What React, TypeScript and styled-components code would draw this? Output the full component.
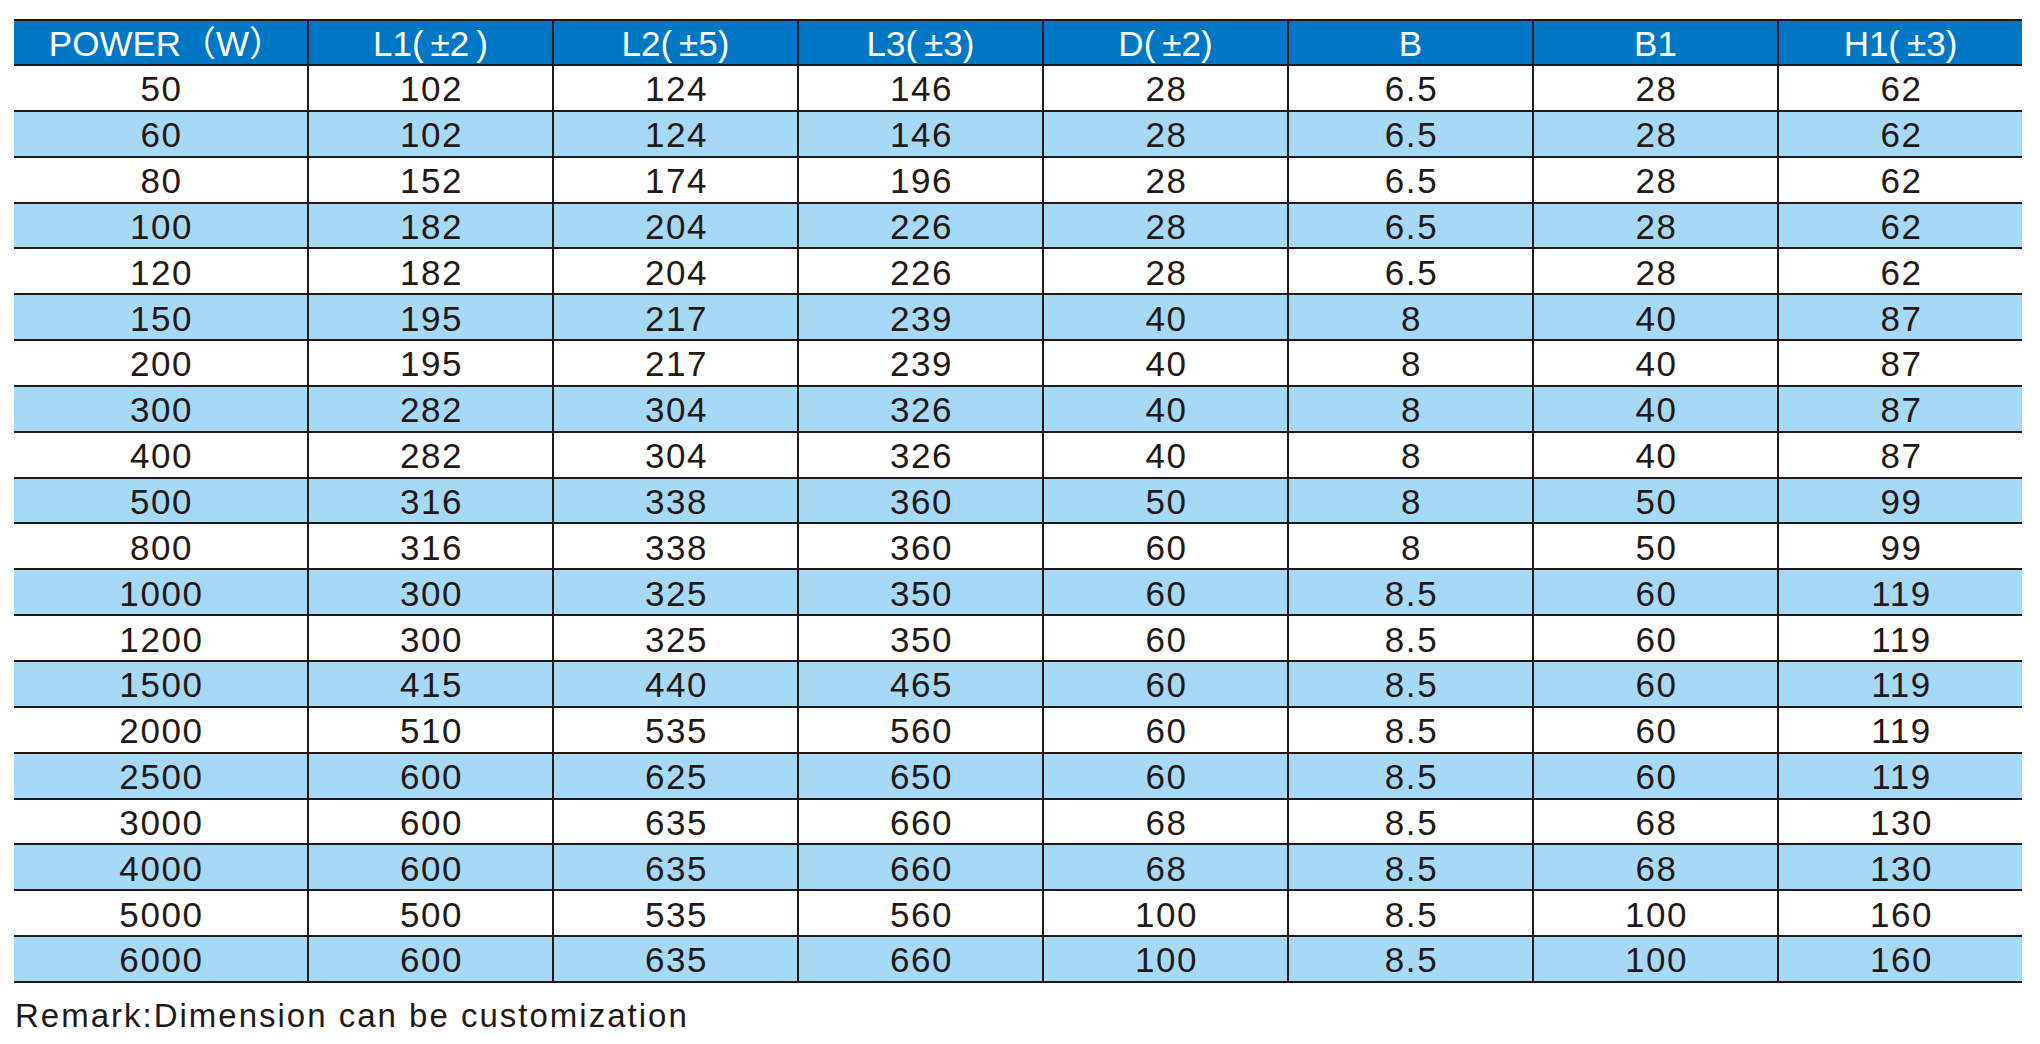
import React from 'react';
import styled, { createGlobalStyle } from 'styled-components';

const GlobalStyle = createGlobalStyle`
  html, body {
    margin: 0;
    padding: 0;
    background: #ffffff;
  }
  body {
    font-family: "Liberation Sans", Arial, "Noto Sans CJK SC", sans-serif;
    color: #231815;
  }
`;

const Page = styled.div`
  padding: 19px 18px 0 14px;
`;

const SpecTable = styled.table`
  width: 2008px;
  border-collapse: collapse;
  table-layout: fixed;
  border-top: 2px solid #231815;
  border-bottom: 2px solid #231815;
`;

const HeadCell = styled.th`
  background: #0077c4;
  color: #ffffff;
  font-weight: 400;
  font-size: 35px;
  letter-spacing: 0;
  height: 41px;
  padding: 2px 0 0 0;
  text-align: center;
  vertical-align: middle;
  border-left: 2px solid #231815;
  border-bottom: 2px solid #231815;
  line-height: 1;

  &:first-child {
    border-left: none;
    padding-left: 12px;
  }
`;

const Row = styled.tr<{ $alt: boolean }>`
  background: ${(p) => (p.$alt ? '#a6d9f6' : '#ffffff')};
`;

const Cell = styled.td`
  font-size: 35px;
  letter-spacing: 1.6px;
  padding: 2px 0 0 2px;
  height: 41.85px;
  text-align: center;
  vertical-align: middle;
  line-height: 1;
  border-left: 2px solid #231815;
  border-bottom: 2px solid #231815;

  &:first-child {
    border-left: none;
  }
`;

const Remark = styled.p`
  margin: 14px 0 0 1px;
  font-size: 33px;
  letter-spacing: 2px;
  color: #231815;
`;

const columns = [
  { label: 'POWER（W）', width: 294 },
  { label: 'L1(\u2009±2\u2009)', width: 245 },
  { label: 'L2(\u2009±5)', width: 245 },
  { label: 'L3(\u2009±3)', width: 245 },
  { label: 'D(\u2009±2)', width: 245 },
  { label: 'B', width: 245 },
  { label: 'B1', width: 245 },
  { label: 'H1(\u2009±3)', width: 244 },
];

const rows: string[][] = [
  ['50', '102', '124', '146', '28', '6.5', '28', '62'],
  ['60', '102', '124', '146', '28', '6.5', '28', '62'],
  ['80', '152', '174', '196', '28', '6.5', '28', '62'],
  ['100', '182', '204', '226', '28', '6.5', '28', '62'],
  ['120', '182', '204', '226', '28', '6.5', '28', '62'],
  ['150', '195', '217', '239', '40', '8', '40', '87'],
  ['200', '195', '217', '239', '40', '8', '40', '87'],
  ['300', '282', '304', '326', '40', '8', '40', '87'],
  ['400', '282', '304', '326', '40', '8', '40', '87'],
  ['500', '316', '338', '360', '50', '8', '50', '99'],
  ['800', '316', '338', '360', '60', '8', '50', '99'],
  ['1000', '300', '325', '350', '60', '8.5', '60', '119'],
  ['1200', '300', '325', '350', '60', '8.5', '60', '119'],
  ['1500', '415', '440', '465', '60', '8.5', '60', '119'],
  ['2000', '510', '535', '560', '60', '8.5', '60', '119'],
  ['2500', '600', '625', '650', '60', '8.5', '60', '119'],
  ['3000', '600', '635', '660', '68', '8.5', '68', '130'],
  ['4000', '600', '635', '660', '68', '8.5', '68', '130'],
  ['5000', '500', '535', '560', '100', '8.5', '100', '160'],
  ['6000', '600', '635', '660', '100', '8.5', '100', '160'],
];

export default function App() {
  return (
    <Page>
      <GlobalStyle />
      <SpecTable>
        <colgroup>
          {columns.map((c) => (
            <col key={c.label} style={{ width: c.width }} />
          ))}
        </colgroup>
        <thead>
          <tr>
            {columns.map((c) => (
              <HeadCell key={c.label}>{c.label}</HeadCell>
            ))}
          </tr>
        </thead>
        <tbody>
          {rows.map((r, i) => (
            <Row key={r[0]} $alt={i % 2 === 1}>
              {r.map((v, j) => (
                <Cell key={j}>{v}</Cell>
              ))}
            </Row>
          ))}
        </tbody>
      </SpecTable>
      <Remark>Remark:Dimension can be customization</Remark>
    </Page>
  );
}
